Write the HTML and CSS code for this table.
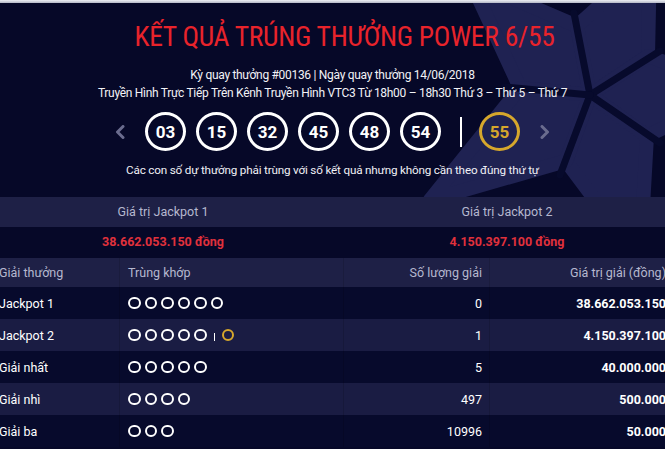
FILE: index.html
```html
<!DOCTYPE html>
<html lang="vi">
<head>
<meta charset="utf-8">
<title>Kết quả Power 6/55</title>
<link rel="stylesheet" href="styles.css">
</head>
<body>
<div class="strip"></div>
<main class="board">
  <section class="hero">
    <svg class="star" viewBox="0 0 665 194" aria-hidden="true">
      <g fill="#1f2252" stroke="#1f2252" stroke-width="14" stroke-linejoin="round">
        <polygon points="590,92 520,85 470,-23 577,23"/>
        <polygon points="590,92 577,23 650,-43 648,53"/>
        <polygon points="590,92 648,53 740,87 647,133"/>
        <polygon points="590,92 647,133 640,257 566,158"/>
        <polygon points="590,92 566,158 430,197 520,85"/>
      </g>
      <g stroke="#070a2c" stroke-width="7" stroke-linecap="round">
        <line x1="590" y1="92" x2="574" y2="10"/>
        <line x1="590" y1="92" x2="660" y2="48"/>
        <line x1="590" y1="92" x2="660" y2="140"/>
        <line x1="590" y1="92" x2="560" y2="172"/>
        <line x1="590" y1="92" x2="505" y2="84"/>
      </g>
    </svg>
    <h1 class="title">KẾT QUẢ TRÚNG THƯỞNG POWER 6/55</h1>
    <p class="meta">Kỳ quay thưởng #00136 | Ngày quay thưởng 14/06/2018</p>
    <p class="meta">Truyền Hình Trực Tiếp Trên Kênh Truyền Hình VTC3 Từ 18h00 – 18h30 Thứ 3 – Thứ 5 – Thứ 7</p>
    <div class="balls">
      <svg class="arrow" viewBox="0 0 10 14" aria-hidden="true"><path d="M8 1.5 L2.5 7 L8 12.5"/></svg>
      <span class="ball">03</span>
      <span class="ball">15</span>
      <span class="ball">32</span>
      <span class="ball">45</span>
      <span class="ball">48</span>
      <span class="ball">54</span>
      <span class="sep"></span>
      <span class="ball gold">55</span>
      <svg class="arrow" viewBox="0 0 10 14" aria-hidden="true"><path d="M2 1.5 L7.5 7 L2 12.5"/></svg>
    </div>
    <p class="note">Các con số dự thưởng phải trùng với số kết quả nhưng không cần theo đúng thứ tự</p>
  </section>

  <div class="tables">
    <div class="jackpot">
      <div class="jp-head">Giá trị Jackpot 1</div>
      <div class="jp-head">Giá trị Jackpot 2</div>
      <div class="jp-val">38.662.053.150 đồng</div>
      <div class="jp-val">4.150.397.100 đồng</div>
    </div>

    <div class="prizes">
      <div class="row head">
        <div class="c1">Giải thưởng</div>
        <div class="c2">Trùng khớp</div>
        <div class="c3">Số lượng giải</div>
        <div class="c4">Giá trị giải (đồng)</div>
      </div>
      <div class="row dark">
        <div class="c1">Jackpot 1</div>
        <div class="c2"><i class="dot"></i><i class="dot"></i><i class="dot"></i><i class="dot"></i><i class="dot"></i><i class="dot"></i></div>
        <div class="c3">0</div>
        <div class="c4 val">38.662.053.150</div>
      </div>
      <div class="row light">
        <div class="c1">Jackpot 2</div>
        <div class="c2"><i class="dot"></i><i class="dot"></i><i class="dot"></i><i class="dot"></i><i class="dot"></i><b class="bar"></b><i class="dot gold"></i></div>
        <div class="c3">1</div>
        <div class="c4 val">4.150.397.100</div>
      </div>
      <div class="row dark">
        <div class="c1">Giải nhất</div>
        <div class="c2"><i class="dot"></i><i class="dot"></i><i class="dot"></i><i class="dot"></i><i class="dot"></i></div>
        <div class="c3">5</div>
        <div class="c4 val">40.000.000</div>
      </div>
      <div class="row light">
        <div class="c1">Giải nhì</div>
        <div class="c2"><i class="dot"></i><i class="dot"></i><i class="dot"></i><i class="dot"></i></div>
        <div class="c3">497</div>
        <div class="c4 val">500.000</div>
      </div>
      <div class="row dark">
        <div class="c1">Giải ba</div>
        <div class="c2"><i class="dot"></i><i class="dot"></i><i class="dot"></i></div>
        <div class="c3">10996</div>
        <div class="c4 val">50.000</div>
      </div>
    </div>
  </div>
</main>
</body>
</html>
```

FILE: styles.css
```css
html, body {
  margin: 0;
  padding: 0;
  background: #060828;
  overflow: hidden;
}
body {
  width: 665px;
  height: 449px;
  font-family: Roboto, "Noto Sans", "DejaVu Sans", sans-serif;
  color: #ffffff;
}
.strip {
  height: 3px;
  background: linear-gradient(#eef0f4, #b4b7c6);
}
.board {
  position: relative;
  overflow: hidden;
}
.hero {
  position: relative;
  height: 194px;
  box-sizing: border-box;
  padding-top: 19px;
  text-align: center;
  overflow: hidden;
}
.star {
  position: absolute;
  left: 0;
  top: 0;
  width: 665px;
  height: 194px;
}
.hero > h1, .hero > p, .hero > div {
  position: relative;
}
.title {
  margin: 0;
  padding-left: 24px;
  font-size: 27.6px;
  line-height: 30px;
  font-weight: 400;
  color: #e8232b;
  font-stretch: condensed;
  letter-spacing: -0.3px;
}
.meta {
  margin: 0;
  font-size: 12px;
  line-height: 18px;
  letter-spacing: -0.3px;
  color: #f2f2f6;
}
.title + .meta {
  margin-top: 14px;
}
.balls {
  margin-top: 10px;
  height: 39px;
  display: flex;
  align-items: center;
  justify-content: center;
}
.arrow {
  width: 10px;
  height: 14px;
  fill: none;
  stroke: #6a6c8e;
  stroke-width: 3;
  stroke-linecap: round;
  stroke-linejoin: round;
}
.arrow:first-child { margin-right: 20px; }
.arrow:last-child { margin-left: 20px; }
.ball {
  box-sizing: border-box;
  width: 41px;
  height: 39px;
  border: 3px solid #ffffff;
  border-radius: 50%;
  display: flex;
  align-items: center;
  justify-content: center;
  font-size: 17px;
  font-weight: 700;
  color: #ffffff;
  margin-right: 10px;
}
.ball:nth-of-type(6) { margin-right: 0; }
.ball.gold {
  border-color: #d6a72c;
  color: #d6a72c;
  margin-right: 0;
}
.sep {
  width: 2px;
  height: 30px;
  background: #ffffff;
  margin: 0 17px 0 19px;
}
.note {
  margin: 11px 0 0;
  font-size: 11.7px;
  line-height: 16px;
  letter-spacing: -0.18px;
  color: #f0f0f5;
}

.tables {
  width: 688px;
  margin-left: -9px;
  font-size: 12.5px;
}
.jackpot {
  display: grid;
  grid-template-columns: 1fr 1fr;
}
.jp-head {
  height: 30px;
  line-height: 30px;
  text-align: center;
  background: #1e2046;
  color: #b6b8cf;
}
.jp-val {
  height: 29px;
  line-height: 29px;
  text-align: center;
  background: #060828;
  color: #e0313c;
  font-weight: 700;
}
.prizes {
  margin-top: 2px;
}
.row {
  display: grid;
  grid-template-columns: 129px 224px 146px 189px;
  height: 32px;
}
.row.head {
  height: 29px;
  background: #1e2046;
  color: #b6b8cf;
}
.row.dark { background: #070a2c; }
.row.light { background: #1a1c43; }
.row > div {
  display: flex;
  align-items: center;
  border-right: 1px solid rgba(0, 0, 0, 0.12);
}
.c1 { padding-left: 8px; }
.c2 { padding-left: 8px; gap: 4px; }
.c3 { justify-content: flex-end; padding-right: 7px; }
.c4 { justify-content: flex-end; padding-right: 12px; }
.val { font-weight: 700; }
.dot {
  box-sizing: border-box;
  width: 12.5px;
  height: 12.5px;
  border: 2px solid #ffffff;
  border-radius: 50%;
  display: block;
}
.dot.gold { border-color: #d6a72c; }
.bar {
  display: block;
  width: 1px;
  height: 8px;
  background: #ffffff;
  margin: 4px 3px 0;
  align-self: center;
}
```
